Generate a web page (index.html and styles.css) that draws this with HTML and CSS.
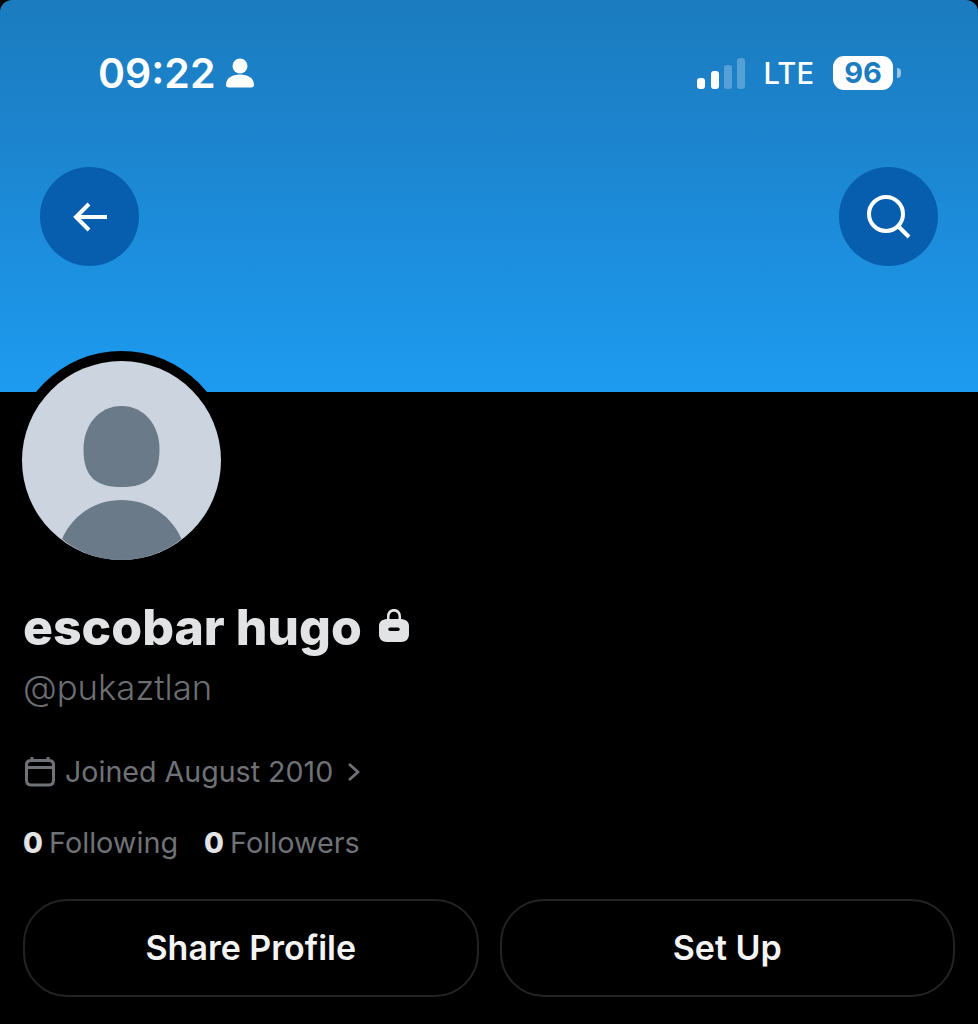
FILE: index.html
```html
<!DOCTYPE html>
<html lang="en">
<head>
<meta charset="utf-8">
<title>escobar hugo (@pukaztlan)</title>
<link rel="stylesheet" href="styles.css">
</head>
<body>
<main class="screen">
  <header class="banner">
    <div class="status">
      <div class="status-left">
        <span class="time">09:22</span>
        <svg class="person" viewBox="0 0 28 30" aria-hidden="true"><circle cx="14" cy="8" r="7.5"/><path d="M0 27c0-7 6-10.500 14-10.500S28 20 28 27c0 1.500-1 2.500-3 2.500H3c-2 0-3-1-3-2.500z"/></svg>
      </div>
      <div class="status-right">
        <svg class="signal" viewBox="0 0 48 31" aria-hidden="true">
          <rect x="0" y="20" width="8" height="11" rx="3" fill="#fff"/>
          <rect x="14" y="13" width="8" height="18" rx="3" fill="#fff"/>
          <rect x="27" y="7" width="8" height="24" rx="3" fill="#fff" opacity=".25"/>
          <rect x="40" y="0" width="8" height="31" rx="3" fill="#fff" opacity=".25"/>
        </svg>
        <span class="lte">LTE</span>
        <span class="battery"><span class="battery-level">96</span><span class="battery-cap"></span></span>
      </div>
    </div>
    <nav class="nav">
      <button class="round" aria-label="Back">
        <svg viewBox="0 0 36 32" class="nav-icon"><path d="M35 16H4M17 3 4 16l13 13" fill="none" stroke="#fff" stroke-width="4"/></svg>
      </button>
      <button class="round" aria-label="Search">
        <svg viewBox="0 0 44 44" class="nav-icon search"><circle cx="19" cy="19" r="17" fill="none" stroke="#fff" stroke-width="4"/><path d="m31 31 11 11" stroke="#fff" stroke-width="4" fill="none"/></svg>
      </button>
    </nav>
  </header>
  <section class="profile">
    <div class="avatar">
      <svg viewBox="0 0 199 199" aria-hidden="true">
        <circle cx="99.500" cy="99.500" r="99.500" fill="#ccd5df"/>
        <path d="M99.500 45C122 45 137.500 64 137.500 88c0 28-12 38-38 38s-38-10-38-38C61.500 64 77 45 99.500 45z" fill="#6a7a89"/>
        <path d="M40 178c10-23 32-39 59.500-39s50 16 60 39c-16 13-37 21-60 21s-44-8-59.500-21z" fill="#6a7a89"/>
      </svg>
    </div>
    <h1 class="name">escobar hugo
      <svg class="lock" viewBox="0 0 30 34" aria-hidden="true"><path fill-rule="evenodd" d="M8 11V8.500C8 3.500 11 1 15 1s7 2.500 7 7.500V11c5 .3 8 3 8 7v8c0 5-3 8-8 8H8c-5 0-8-3-8-8v-8c0-4 3-6.700 8-7zm2.500-.1h9V8.500C19.500 5.500 17.500 3.800 15 3.800s-4.500 1.700-4.500 4.700zM11 19.500a1.500 1.500 0 0 0 0 3.500h8a1.500 1.500 0 0 0 0-3.500z"/></svg>
    </h1>
    <p class="handle">@pukaztlan</p>
    <p class="joined">
      <svg class="calendar" viewBox="0 0 30 30" aria-hidden="true"><path d="M7 0v5M23 0v5M1.500 10.500h27M6 3.500h18c3 0 4.500 1.500 4.500 4.500v15c0 3-1.500 5-4.500 5H6c-3 0-4.500-2-4.500-5V8c0-3 1.500-4.500 4.500-4.500z" fill="none" stroke="currentColor" stroke-width="3"/></svg>
      <span>Joined August 2010</span>
      <svg class="chevron" viewBox="0 0 13 20" aria-hidden="true"><path d="m2 2 9 8-9 8" fill="none" stroke="currentColor" stroke-width="2.800"/></svg>
    </p>
    <p class="stats">
      <span class="stat"><b>0</b> Following</span>
      <span class="stat"><b>0</b> Followers</span>
    </p>
    <div class="actions">
      <button class="pill">Share Profile</button>
      <button class="pill">Set Up</button>
    </div>
  </section>
</main>
</body>
</html>
```

FILE: styles.css
```css
* { box-sizing: border-box; }
html, body { margin: 0; padding: 0; background: #000; }
body { font-family: Inter, "Noto Sans", sans-serif; }
.screen { width: 978px; height: 1024px; background: #000; overflow: hidden; }

.banner {
  height: 392px;
  padding: 50px 40px 0;
  background: linear-gradient(180deg, #1b7cbf 0%, #1c84ce 35%, #1d9bf0 100%);
  border-radius: 12px 12px 0 0;
  color: #fff;
}
.status {
  height: 46px;
  display: flex;
  justify-content: space-between;
  align-items: center;
  padding: 0 37px 0 58px;
}
.status-left { display: flex; align-items: center; gap: 11px; }
.time { font-size: 41px; font-weight: 600; line-height: 46px; }
.person { width: 28px; height: 30px; fill: #fff; }
.status-right { display: flex; align-items: center; }
.signal { width: 48px; height: 31px; margin-right: 19px; }
.lte { font-size: 29.200px; font-weight: 500; line-height: 46px; margin: 2px 19px 0 0; }
.battery { display: flex; align-items: center; gap: 4px; }
.battery-level {
  width: 60px; height: 34px;
  background: #fff;
  border-radius: 11px;
  color: #1b7cbf;
  font-size: 29px;
  font-weight: 700;
  line-height: 34px;
  text-align: center;
}
.battery-cap {
  width: 4px; height: 10px;
  background: rgba(255,255,255,.55);
  border-radius: 0 4px 4px 0;
}
.nav {
  display: flex;
  justify-content: space-between;
  margin-top: 71px;
}
.round {
  width: 99px; height: 99px;
  padding: 0;
  border: 0;
  border-radius: 50%;
  background: #075eae;
  display: flex;
  align-items: center;
  justify-content: center;
}
.nav-icon { width: 36px; height: 32px; }
.nav-icon.search { width: 44px; height: 44px; }

.profile { position: relative; padding: 0 23px; }
.avatar {
  position: absolute;
  left: 12px;
  top: -41px;
  width: 219px; height: 219px;
  padding: 10px;
  border-radius: 50%;
  background: #000;
}
.avatar svg { display: block; width: 199px; height: 199px; }
.name {
  margin: 0;
  padding-top: 206px;
  font-size: 49.900px;
  line-height: 58px;
  font-weight: 800;
  color: #e2e3e4;
  display: flex;
  align-items: center;
  gap: 17px;
}
.lock { width: 30px; height: 34px; fill: #e2e3e4; margin-top: -4px; }
.handle {
  margin: 7px 0 0;
  font-size: 34.700px;
  line-height: 48px;
  font-weight: 300;
  color: #6c6f72;
}
.joined {
  margin: 39px 0 0;
  display: flex;
  align-items: center;
  font-size: 28.600px;
  line-height: 44px;
  color: #6f7276;
}
.calendar { width: 30px; height: 30px; margin: 0 10px 0 2px; }
.chevron { width: 13px; height: 20px; margin-left: 14px; }
.stats {
  margin: 27px 0 0;
  display: flex;
  gap: 26px;
  font-size: 28.800px;
  line-height: 44px;
  color: #6f7276;
}
.stat b { color: #e2e3e4; font-weight: 800; margin-right: -2px; }
.actions {
  margin-top: 34px;
  display: flex;
  gap: 21px;
}
.pill {
  flex: 1;
  height: 98px;
  border: 2px solid #232325;
  border-radius: 44px;
  background: #000;
  color: #f4f4f4;
  font: 600 34px/44px Inter, sans-serif;
  padding: 0;
}
```
